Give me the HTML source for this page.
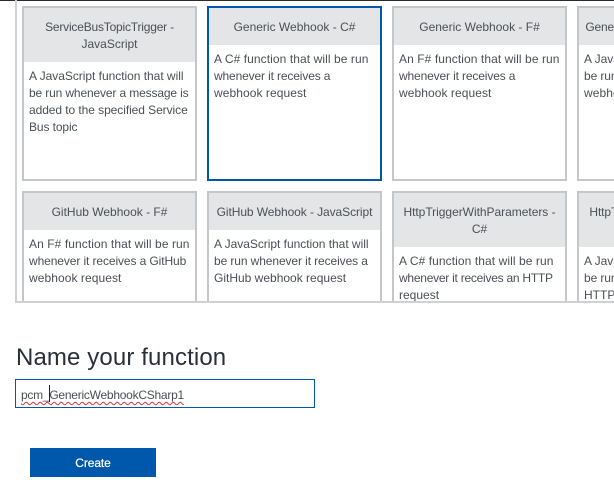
<!DOCTYPE html>
<html>
<head>
<meta charset="utf-8">
<style>
html,body{margin:0;padding:0;background:#fff;width:614px;height:503px;overflow:hidden}
body{position:relative;font-family:"Liberation Sans",sans-serif;color:#4a4f57;font-size:12px}
.abs{position:absolute}
.viewport{position:absolute;left:0;top:0;width:614px;height:301px;overflow:hidden}
.card{position:absolute;width:175px;height:175px;box-sizing:border-box;border:2px solid #c3c6cb;background:#fff}
.card.sel{border-color:#0058ad}
.hd{position:absolute;left:0;top:0;width:171px;background:#e4e5e7}
.h1{height:37px}.h2{height:54px}
.t{position:absolute;left:0;width:171px;text-align:center;white-space:nowrap;line-height:17px}
.l{position:absolute;left:5px;white-space:nowrap;line-height:17px}
.a{letter-spacing:.08px}
.b{letter-spacing:-.14px}
.c{letter-spacing:-.1px}
.w{letter-spacing:.07px}
</style>
</head>
<body>
<div class="abs" style="left:0;top:0;width:614px;height:1px;background:#2b2b2b"></div>
<div class="abs" style="left:15px;top:0;width:2px;height:303px;background:#d0d1d3"></div>
<div class="abs" style="left:15px;top:301px;width:599px;height:2px;background:#d0d1d3"></div>
<div class="viewport">
  <div class="card" style="left:22px;top:6px">
    <div class="hd h2"></div>
    <div class="t" style="top:11px;letter-spacing:-.2px">ServiceBusTopicTrigger -</div>
    <div class="t" style="top:28px">JavaScript</div>
    <div class="l" style="top:60px;letter-spacing:-.03px">A JavaScript function that will</div>
    <div class="l" style="top:77px;letter-spacing:-.14px">be run whenever a message is</div>
    <div class="l" style="top:94px;letter-spacing:-.07px">added to the specified Service</div>
    <div class="l" style="top:111px;letter-spacing:-.1px">Bus topic</div>
  </div>
  <div class="card sel" style="left:207px;top:6px">
    <div class="hd h1"></div>
    <div class="t" style="top:11px">Generic Webhook - C#</div>
    <div class="l a" style="top:43px">A C# function that will be run</div>
    <div class="l b" style="top:60px">whenever it receives a</div>
    <div class="l w" style="top:77px">webhook request</div>
  </div>
  <div class="card" style="left:392px;top:6px">
    <div class="hd h1"></div>
    <div class="t" style="top:11px">Generic Webhook - F#</div>
    <div class="l a" style="top:43px">An F# function that will be run</div>
    <div class="l b" style="top:60px">whenever it receives a</div>
    <div class="l w" style="top:77px">webhook request</div>
  </div>
  <div class="card" style="left:577px;top:6px">
    <div class="hd h1"></div>
    <div class="t" style="top:11px;letter-spacing:-.15px">Generic Webhook - JavaScript</div>
    <div class="l" style="top:43px;letter-spacing:-.03px">A JavaScript function that will</div>
    <div class="l c" style="top:60px">be run whenever it receives a</div>
    <div class="l w" style="top:77px">webhook request</div>
  </div>
  <div class="card" style="left:22px;top:191px">
    <div class="hd h1"></div>
    <div class="t" style="top:11px">GitHub Webhook - F#</div>
    <div class="l a" style="top:43px">An F# function that will be run</div>
    <div class="l c" style="top:60px">whenever it receives a GitHub</div>
    <div class="l w" style="top:77px">webhook request</div>
  </div>
  <div class="card" style="left:207px;top:191px">
    <div class="hd h1"></div>
    <div class="t" style="top:11px;letter-spacing:-.08px">GitHub Webhook - JavaScript</div>
    <div class="l" style="top:43px;letter-spacing:-.03px">A JavaScript function that will</div>
    <div class="l c" style="top:60px">be run whenever it receives a</div>
    <div class="l" style="top:77px">GitHub webhook request</div>
  </div>
  <div class="card" style="left:392px;top:191px">
    <div class="hd h2"></div>
    <div class="t" style="top:11px;letter-spacing:-.03px">HttpTriggerWithParameters -</div>
    <div class="t" style="top:28px">C#</div>
    <div class="l a" style="top:60px">A C# function that will be run</div>
    <div class="l" style="top:77px;letter-spacing:-.25px">whenever it receives an HTTP</div>
    <div class="l" style="top:94px">request</div>
  </div>
  <div class="card" style="left:577px;top:191px">
    <div class="hd h2"></div>
    <div class="t" style="top:11px;letter-spacing:-.1px">HttpTriggerWithParameters -</div>
    <div class="t" style="top:28px">JavaScript</div>
    <div class="l" style="top:60px;letter-spacing:-.03px">A JavaScript function that will</div>
    <div class="l c" style="top:77px">be run whenever it receives an</div>
    <div class="l" style="top:94px">HTTP request</div>
  </div>
</div>
<div class="abs" style="left:16px;top:343px;font-size:24px;line-height:30px;color:#2a303a;white-space:nowrap;letter-spacing:.12px">Name your function</div>
<div class="abs" style="left:15px;top:379px;width:300px;height:29px;box-sizing:border-box;border:1px solid #0058ad;background:#fff"></div>
<div class="abs" style="left:21px;top:387px;font-size:12px;line-height:16px;color:#4a4f57;white-space:nowrap;letter-spacing:-.25px;text-decoration:underline wavy #e0303a 1px;text-underline-offset:2px">pcm_GenericWebhookCSharp1</div>
<div class="abs" style="left:49px;top:385px;width:1px;height:17px;background:#222"></div>
<div class="abs" style="left:30px;top:448px;width:126px;height:29px;background:#0058ad;color:#fff;text-align:center;line-height:30px;font-size:12px;-webkit-text-stroke:.2px #fff;letter-spacing:-.1px">Create</div>
</body>
</html>
